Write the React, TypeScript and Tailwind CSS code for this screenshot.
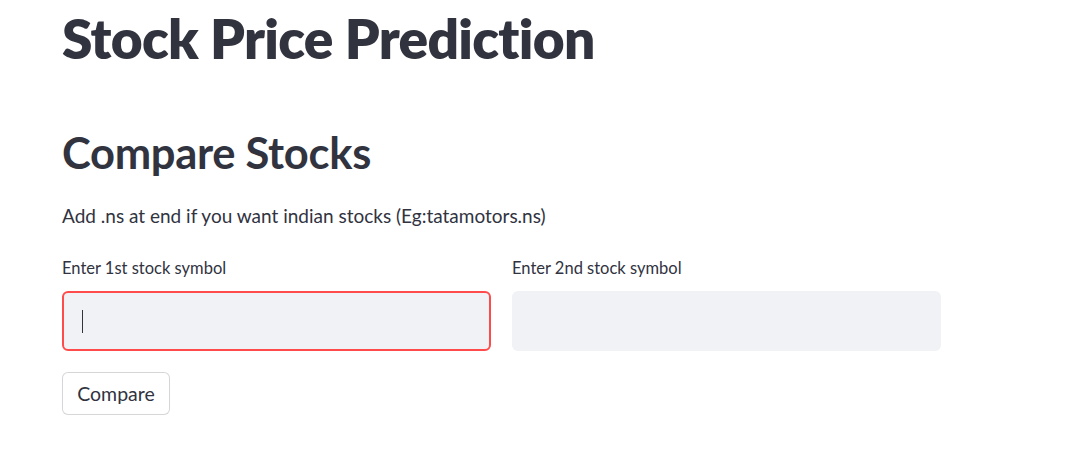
import React from "react";

const font = { fontFamily: '"Source Sans Pro", Lato, "Liberation Sans", sans-serif' };

export default function App() {
  return (
    <div className="min-h-[471px] w-full bg-white text-[#31333f]" style={font}>
      <div className="ml-[62px] flex w-[879px] flex-col">
        <h1 className="mt-[5px] text-[55px] font-extrabold leading-[66px] tracking-[-0.7px] [font-variant-ligatures:none]">
          Stock Price Prediction
        </h1>
        <h2 className="mt-[55px] text-[43.5px] font-bold leading-[52px] tracking-[-0.3px]">Compare Stocks</h2>
        <p className="mt-[24px] text-[19px] leading-[28px]">
          Add .ns at end if you want indian stocks (Eg:tatamotors.ns)
        </p>
        <div className="mt-[27px] grid grid-cols-2 gap-x-[21px]">
          <label className="flex flex-col">
            <span className="text-[16.5px] leading-[22px]">Enter 1st stock symbol</span>
            <div className="mt-[12px] flex h-[60px] items-center rounded-[6px] border-2 border-[#ff4b4b] bg-[#f0f2f6] px-[18px]">
              <span className="h-[23px] w-px bg-[#31333f]" />
            </div>
          </label>
          <label className="flex flex-col">
            <span className="text-[16.5px] leading-[22px]">Enter 2nd stock symbol</span>
            <div className="mt-[12px] h-[60px] rounded-[6px] bg-[#f0f2f6]" />
          </label>
        </div>
        <div className="mt-[21px]">
          <button className="h-[43px] w-[108px] rounded-[6px] border border-[rgba(49,51,63,0.2)] bg-white text-[19.5px] leading-none text-[#31333f]">
            Compare
          </button>
        </div>
      </div>
    </div>
  );
}
